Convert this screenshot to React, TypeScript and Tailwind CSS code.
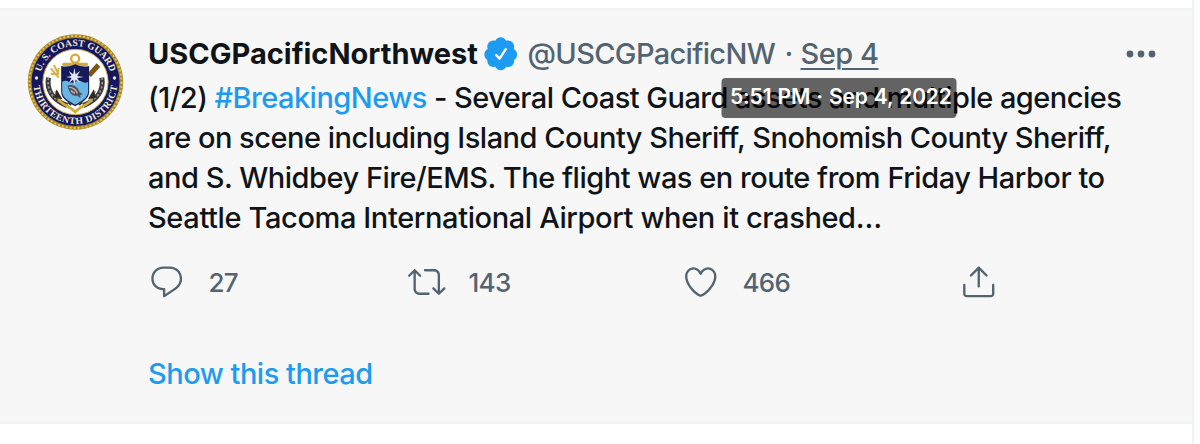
import type { ReactNode } from 'react'

const PATHS = {
  reply: 'M14.046 2.242l-4.148-.01h-.002c-4.374 0-7.8 3.427-7.8 7.802 0 4.098 3.186 7.206 7.465 7.37v3.828c0 .108.044.286.12.403.142.225.384.347.632.347.138 0 .277-.038.402-.118.264-.168 6.473-4.14 8.088-5.506 1.902-1.61 3.04-3.97 3.043-6.312v-.017c-.006-4.367-3.43-7.787-7.8-7.788zm3.787 12.972c-1.134.96-4.862 3.405-6.772 4.643V16.67c0-.414-.335-.75-.75-.75h-.396c-3.66 0-6.318-2.476-6.318-5.886 0-3.534 2.768-6.302 6.3-6.302l4.147.01h.002c3.532 0 6.3 2.766 6.302 6.296-.003 1.91-.942 3.844-2.514 5.176z',
  retweet: 'M23.77 15.67c-.292-.293-.767-.293-1.06 0l-2.22 2.22V7.65c0-2.068-1.683-3.75-3.75-3.75h-5.85c-.414 0-.75.336-.75.75s.336.75.75.75h5.85c1.24 0 2.25 1.01 2.25 2.25v10.24l-2.22-2.22c-.293-.293-.768-.293-1.06 0s-.294.768 0 1.06l3.5 3.5c.145.147.337.22.53.22s.383-.072.53-.22l3.5-3.5c.294-.292.294-.767 0-1.06zm-10.66 3.28H7.26c-1.24 0-2.25-1.01-2.25-2.25V6.46l2.22 2.22c.148.147.34.22.532.22s.384-.073.53-.22c.293-.293.293-.768 0-1.06l-3.5-3.5c-.293-.294-.768-.294-1.06 0l-3.5 3.5c-.294.292-.294.767 0 1.06s.767.293 1.06 0l2.22-2.22V16.7c0 2.068 1.683 3.75 3.75 3.75h5.85c.414 0 .75-.336.75-.75s-.337-.75-.75-.75z',
  like: 'M12 21.638h-.014C9.403 21.59 1.95 14.856 1.95 8.478c0-3.064 2.525-5.754 5.403-5.754 2.29 0 3.83 1.58 4.646 2.73.814-1.148 2.354-2.73 4.645-2.73 2.88 0 5.404 2.69 5.404 5.755 0 6.376-7.454 13.11-10.037 13.157H12zM7.354 4.225c-2.08 0-3.903 1.988-3.903 4.255 0 5.74 7.034 11.596 8.55 11.658 1.518-.062 8.55-5.917 8.55-11.658 0-2.267-1.823-4.255-3.903-4.255-2.528 0-3.94 2.936-3.952 2.965-.23.562-1.156.562-1.387 0-.014-.03-1.425-2.965-3.954-2.965z',
  share: 'M17.53 7.47l-5-5c-.293-.293-.768-.293-1.06 0l-5 5c-.294.293-.294.768 0 1.06s.767.294 1.06 0l3.72-3.72V15c0 .414.336.75.75.75s.75-.336.75-.75V4.81l3.72 3.72c.146.147.338.22.53.22s.384-.072.53-.22c.293-.293.293-.767 0-1.06zM19.708 21.944H4.292C3.028 21.944 2 20.916 2 19.652V14c0-.414.336-.75.75-.75s.75.336.75.75v5.652c0 .437.355.792.792.792h15.416c.437 0 .792-.355.792-.792V14c0-.414.336-.75.75-.75s.75.336.75.75v5.652c0 1.264-1.028 2.292-2.292 2.292z',
  verified: 'M22.5 12.5c0-1.58-.875-2.95-2.148-3.6.154-.435.238-.905.238-1.4 0-2.21-1.71-3.998-3.818-3.998-.47 0-.92.084-1.336.25C14.818 2.415 13.51 1.5 12 1.5s-2.816.917-3.437 2.25c-.415-.165-.866-.25-1.336-.25-2.11 0-3.818 1.79-3.818 4 0 .494.083.964.237 1.4-1.272.65-2.147 2.018-2.147 3.6 0 1.495.782 2.798 1.942 3.486-.02.17-.032.34-.032.514 0 2.21 1.708 4 3.818 4 .47 0 .92-.086 1.335-.25.62 1.334 1.926 2.25 3.437 2.25 1.512 0 2.818-.916 3.437-2.25.415.163.865.248 1.336.248 2.11 0 3.818-1.79 3.818-4 0-.174-.012-.344-.033-.513 1.158-.687 1.943-1.99 1.943-3.484z',
}

function Icon({ name, className = '' }: { name: keyof typeof PATHS; className?: string }) {
  return (
    <svg viewBox="0 0 24 24" className={`h-[37.5px] w-[37.5px] shrink-0 fill-current ${className}`}>
      <path d={PATHS[name]} />
      {name === 'verified' && (
        <path d="M9.1 12.9l2.15 2.2 4-6" fill="none" stroke="#fff" strokeWidth="1.5" strokeLinecap="round" strokeLinejoin="round" />
      )}
    </svg>
  )
}

// District seal used as the account avatar
function Seal() {
  return (
    <svg viewBox="0 0 290 288" className="h-24 w-[97px] shrink-0">
      <defs>
        <path id="arc-top" d="M37 144a108 108 0 0 1 216 0" />
        <path id="arc-bottom" d="M19 144a126 126 0 0 0 252 0" />
      </defs>
      <circle cx="145" cy="144" r="143" fill="#a8862a" />
      <circle cx="145" cy="144" r="138" fill="none" stroke="#e3c352" strokeWidth="6" strokeDasharray="6 6" />
      <circle cx="145" cy="144" r="132" fill="#14175f" />
      <circle cx="145" cy="144" r="98" fill="#fff" stroke="#c9a83c" strokeWidth="3" />
      <g fill="#f1ead0" fontFamily="'Liberation Serif', serif" fontWeight="700" fontSize="29">
        <text textAnchor="middle">
          <textPath href="#arc-top" startOffset="50%" textLength="278" lengthAdjust="spacing">U. S. COAST GUARD</textPath>
        </text>
        <text textAnchor="middle">
          <textPath href="#arc-bottom" startOffset="50%" textLength="372" lengthAdjust="spacing">THIRTEENTH DISTRICT</textPath>
        </text>
      </g>
      <circle cx="28" cy="132" r="5" fill="#f1ead0" />
      <circle cx="262" cy="132" r="5" fill="#f1ead0" />

      {/* chain */}
      <path d="M64 131c-6 34 10 66 56 84M224 131c6 34-10 66-56 84" fill="none" stroke="#3c3a3c" strokeWidth="15" />
      <path d="M64 131c-6 34 10 66 56 84M224 131c6 34-10 66-56 84" fill="none" stroke="#9a978f" strokeWidth="5" strokeDasharray="7 6" />
      {/* trident and oar */}
      <path d="M71 103l24 28M71 119l19 3 5-20M80 93l15 29" fill="none" stroke="#d9b13e" strokeWidth="6" />
      <path d="M214 93l-28 31" stroke="#7c5413" strokeWidth="15" />
      {/* anchor */}
      <circle cx="144" cy="74" r="12" fill="none" stroke="#d4ac35" strokeWidth="7" />
      <path d="M110 91h68" stroke="#d4ac35" strokeWidth="10" strokeLinecap="round" />
      <path d="M85 171l12 29c20 19 33 17 47 34 14-17 27-15 47-34l12-29" fill="none" stroke="#d4ac35" strokeWidth="8" />
      <path d="M88 166l-6 26 24 4zM200 166l6 26-24 4z" fill="#2d2929" />
      {/* shield */}
      <path d="M102 96q21 5 42-5 21 10 42 5v79c-2 23-24 31-42 42-18-11-40-19-42-42z" fill="#151b58" />
      <path d="M105 143q10-6 20 0t20 0 20 0 18 0v31c-2 19-22 29-39 38-17-9-37-19-39-38z" fill="#69b6e3" />
      <path d="M142 101l3 20 14-10-9 15 20 3-20 3 9 15-14-10-3 17-4-17-13 10 8-15-16-3 16-3-8-15 13 10z" fill="#dfe6f6" />
      <path d="M121 155c14-7 31 3 36 19l10 7-8 2 1 9-10-7c-15 2-24-8-29-30z" fill="#4b5060" />
      <path d="M126 160c12 0 21 9 25 18M131 170l12 8" fill="none" stroke="#d7b1a7" strokeWidth="4" />
      <path d="M132 213l-9-9M156 213l9-9" stroke="#3a3022" strokeWidth="6" />
    </svg>
  )
}

function Action({ icon, count, className }: { icon: keyof typeof PATHS; count?: number; className: string }) {
  return (
    <button className={`flex items-center text-left ${className}`}>
      <Icon name={icon} />
      {count && <span className="ml-[23px] pt-0.5 text-[26px] leading-8 font-[450] tracking-[-0.7px]">{count}</span>}
    </button>
  )
}

function Line({ className, children }: { className: string; children: ReactNode }) {
  return <span className={`block whitespace-nowrap ${className}`}>{children}</span>
}

export default function App() {
  return (
    <div className="h-[444px] w-[1200px] overflow-hidden bg-white font-['Inter',sans-serif] text-[#0f1419]">
      <div className="h-full w-[1194px] border-r-2 border-[#eff3f4] pt-2">
        <article className="flex h-[416px] gap-6 border-y-2 border-[#eff3f4] bg-[#f7f7f7] pt-6 pr-9 pl-[27px]">
          <Seal />
          <div className="min-w-0 flex-1">
            <header className="flex h-10 items-center text-[29px] leading-10 font-[450] whitespace-nowrap text-[#536471]">
              <span className="w-[334px] font-bold tracking-[0.01px] text-[#0f1419]">USCGPacificNorthwest</span>
              <Icon name="verified" className="text-[#1d9bf0]" />
              <span className="ml-2 w-[249px] tracking-[-0.65px]">@USCGPacificNW</span>
              <span className="ml-2 w-4">·</span>
              <div className="relative">
                <a className="tracking-[-0.5px] underline decoration-2 underline-offset-4">Sep 4</a>
                <div className="absolute top-[44px] left-1/2 h-10 w-[235px] -translate-x-1/2 rounded bg-black/60 pl-2 text-[21px] leading-[38px] font-semibold tracking-[-0.15px] [word-spacing:1px] text-white">
                  5:51 PM · Sep 4, 2022
                </div>
              </div>
              <svg viewBox="0 0 30 8" className="ml-auto h-2 w-[30px] fill-current">
                <circle cx="4" cy="4" r="3.4" />
                <circle cx="15" cy="4" r="3.4" />
                <circle cx="26" cy="4" r="3.4" />
              </svg>
            </header>

            <p className="mt-1 text-[29px] leading-10 font-[450]">
              <Line className="tracking-[-0.53px]">
                (1/2) <a className="text-[#1d9bf0]">#BreakingNews</a> - Several Coast Guard assets and multiple agencies
              </Line>
              <Line className="tracking-[-0.5px]">are on scene including Island County Sheriff, Snohomish County Sheriff,</Line>
              <Line className="tracking-[-0.48px]">and S. Whidbey Fire/EMS. The flight was en route from Friday Harbor to</Line>
              <Line className="tracking-[-0.38px]">Seattle Tacoma International Airport when it crashed…</Line>
            </p>

            <div className="mt-[25px] flex h-[38px] text-[#536471]">
              <Action icon="reply" count={27} className="w-[260px]" />
              <Action icon="retweet" count={143} className="w-[274px]" />
              <Action icon="like" count={466} className="w-[278px]" />
              <Action icon="share" className="" />
            </div>

            <a className="mt-[53px] block text-[29px] leading-10 font-[450] tracking-[-0.5px] text-[#1d9bf0]">Show this thread</a>
          </div>
        </article>
      </div>
    </div>
  )
}
